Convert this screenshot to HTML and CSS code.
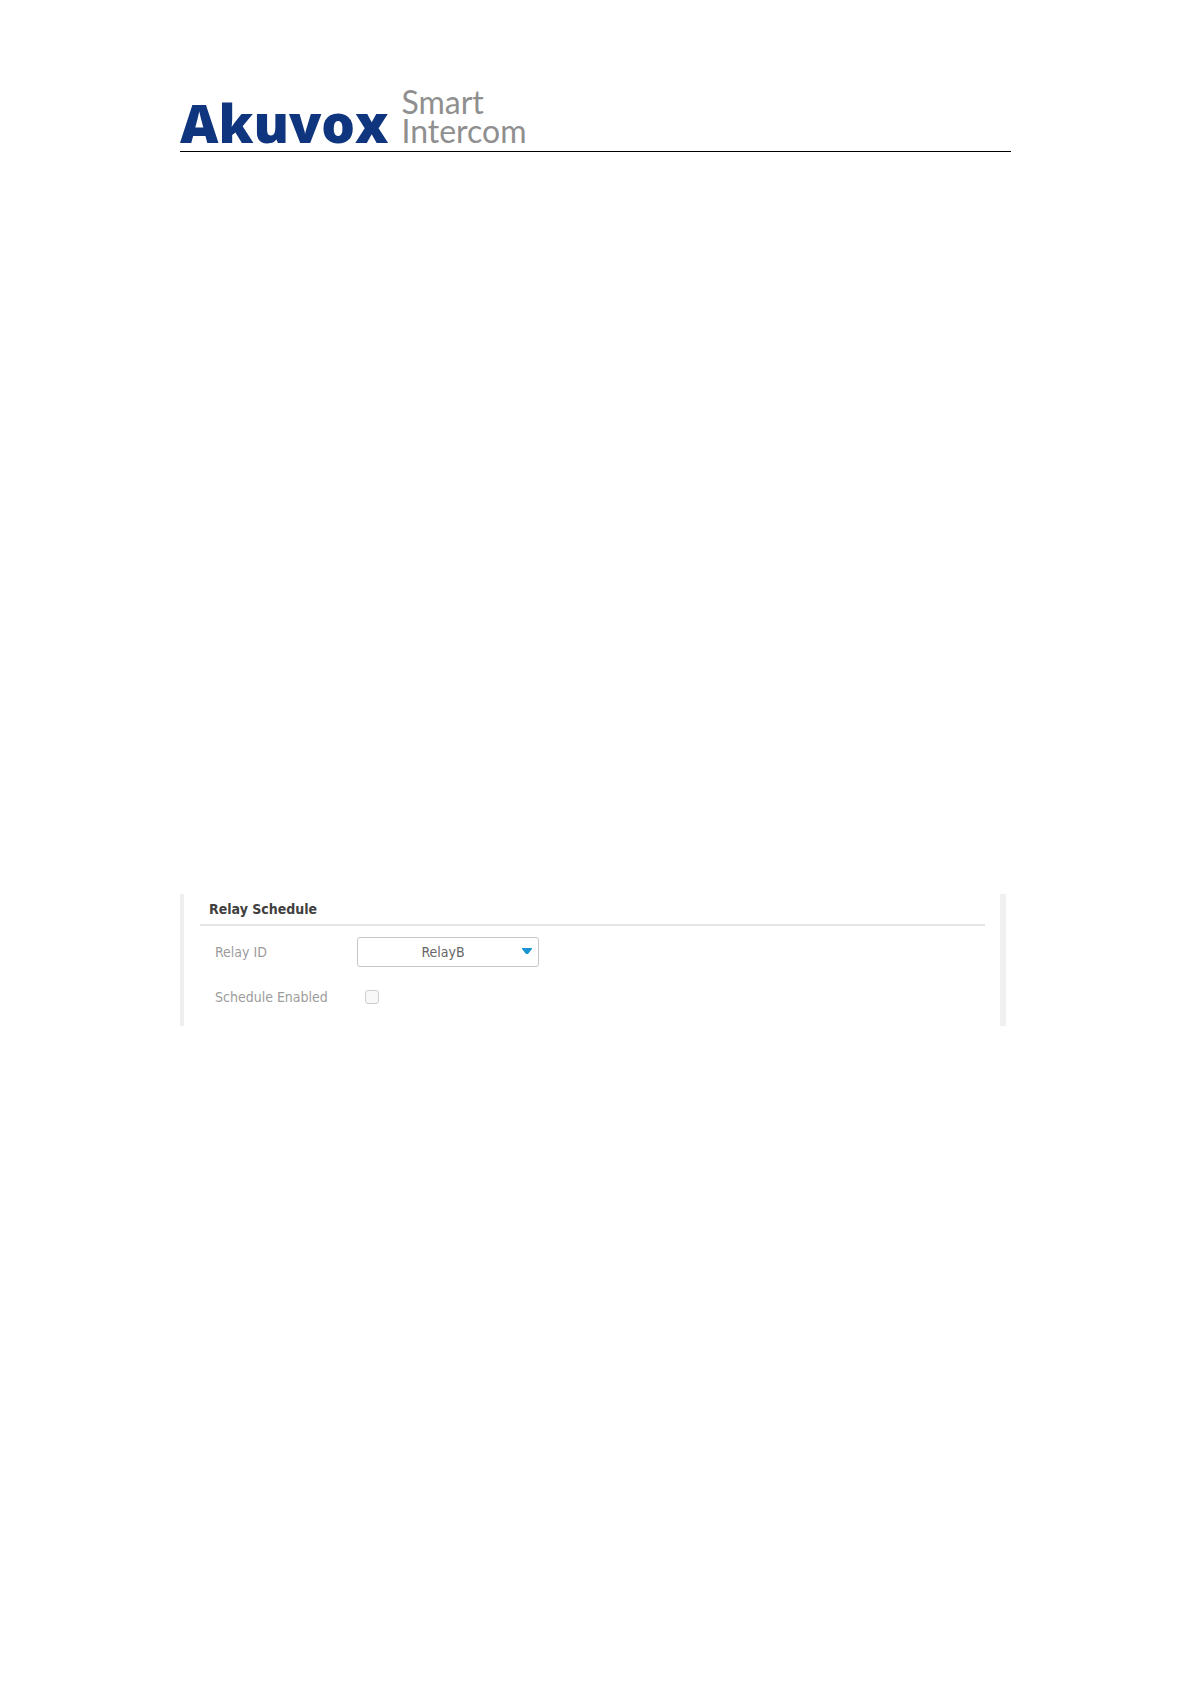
FILE: index.html
```
<!DOCTYPE html>
<html lang="en">
<head>
    <meta charset="UTF-8">
    <meta name="viewport" content="width=device-width, initial-scale=1.0">
    <title>Akuvox - Relay Schedule</title>
    <link rel="stylesheet" href="styles.css">
</head>
<body>

<header class="page-header">
    <span class="brand">Akuvox</span>
    <span class="tagline">Smart<br>Intercom</span>
</header>

<main class="panel">
    <h2>Relay Schedule</h2>
    <form class="settings">
        <div class="row">
            <label for="relay-id">Relay ID</label>
            <div class="select-box">
                <select id="relay-id">
                    <option>RelayA</option>
                    <option selected>RelayB</option>
                </select>
                <svg class="arrow" viewBox="0 0 10 6" aria-hidden="true">
                    <path d="M0 0h10v1L6 6H4L0 1z" fill="#1c94d2"/>
                </svg>
            </div>
        </div>
        <div class="row">
            <label for="schedule-enabled">Schedule Enabled</label>
            <input type="checkbox" id="schedule-enabled">
        </div>
    </form>
</main>

</body>
</html>
```

FILE: styles.css
```
* {
    box-sizing: border-box;
}
body {
    margin: 0;
    padding: 90px 180px 0;
    background-color: #ffffff;
    font-family: "DejaVu Sans Condensed", "Noto Sans", sans-serif;
}
.page-header {
    display: flex;
    align-items: last baseline;
    gap: 13px;
    height: 62px;
    border-bottom: 1px solid #000000;
}
.brand {
    color: #10357f;
    font-family: "Open Sans", sans-serif;
    font-size: 53px;
    font-weight: 800;
    line-height: 56px;
}
.tagline {
    color: #8f8f8f;
    font-family: Lato, sans-serif;
    font-size: 32px;
    font-weight: 400;
    line-height: 29px;
}
.panel {
    margin: 742px 5px 0 0;
    padding: 0 15px 14px 16px;
    border-left: 4px solid #eeeeee;
    border-right: 6px solid #f0f0f0;
}
.panel h2 {
    margin: 0;
    padding: 5px 9px;
    border-bottom: 2px solid #e6e6e6;
    color: #404040;
    font-size: 14px;
    font-weight: 700;
    line-height: 20px;
}
.settings {
    padding: 11px 15px 0;
}
.row {
    display: flex;
    align-items: center;
    height: 30px;
}
.row + .row {
    margin-top: 15px;
}
.row label {
    width: 142px;
    color: #9c9c9c;
    font-size: 14px;
}
.select-box {
    position: relative;
    width: 182px;
}
.select-box select {
    width: 100%;
    height: 30px;
    padding: 0 16px 0 6px;
    border: 1px solid #c6c6c6;
    border-radius: 3px;
    background-color: #ffffff;
    color: #666666;
    font-family: inherit;
    font-size: 14px;
    text-align: center;
    text-align-last: center;
    appearance: none;
}
.arrow {
    position: absolute;
    top: 11px;
    right: 7px;
    width: 10px;
    height: 6px;
    pointer-events: none;
}
.row input {
    width: 14px;
    height: 14px;
    margin: 0 8px;
    border: 1px solid #cfcfcf;
    border-radius: 3px;
    background-color: #f8f8f8;
    appearance: none;
}
.row input:checked {
    background-color: #1c94d2;
}
```
